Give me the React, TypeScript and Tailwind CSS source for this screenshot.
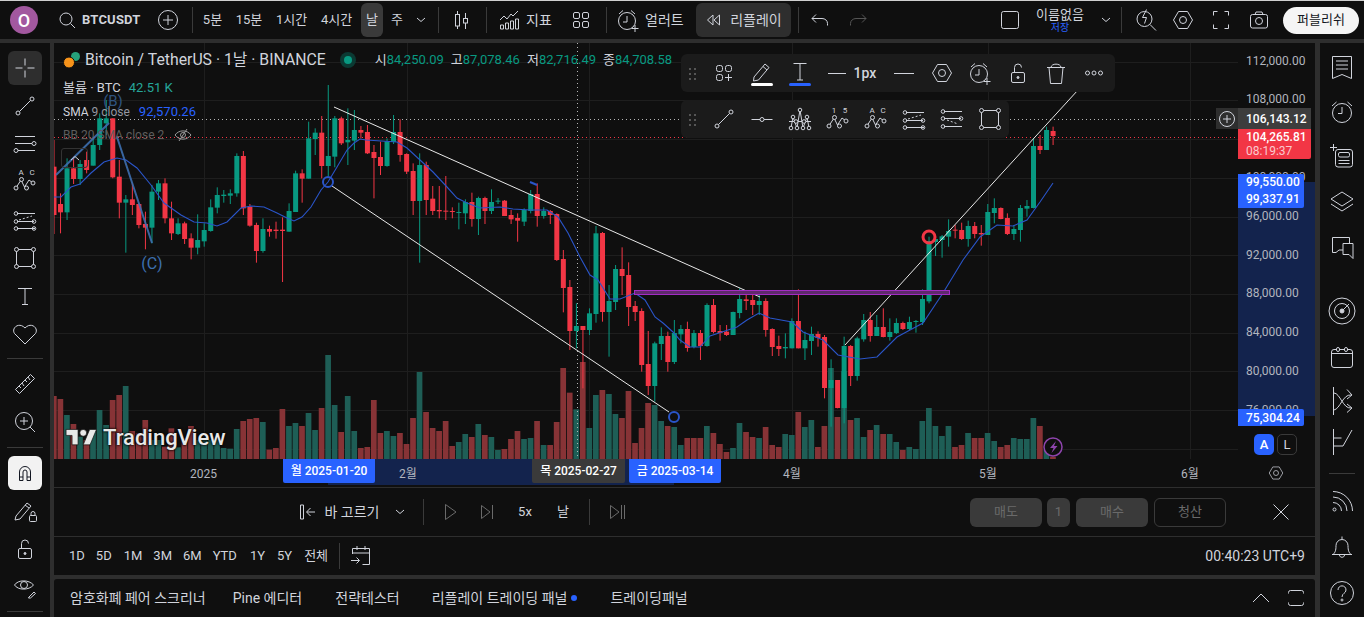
import React from 'react';

type C = [number, number, number, number, number];

// candle values are read off zoomed crops, base + z / 3 gives the pixel y
const candlesA: C[] = [
  [180, 260, 405, 462, 0], [340, 372, 397, 460, 0], [235, 265, 397, 420, 1], [230, 265, 297, 312, 0],
  [240, 252, 297, 315, 1], [215, 240, 270, 280, 0], [170, 195, 257, 257, 1], [100, 115, 195, 210, 1],
  [60, 115, 130, 165, 1], [115, 115, 292, 295, 0], [240, 290, 368, 415, 0], [345, 358, 368, 518, 1],
  [310, 358, 375, 405, 0], [370, 372, 435, 445, 0], [395, 432, 443, 508, 0], [315, 335, 443, 490, 1],
  [300, 310, 335, 360, 1], [295, 310, 415, 430, 0], [365, 415, 460, 480, 0], [415, 430, 462, 465, 1],
  [425, 430, 477, 492, 0], [460, 475, 503, 538, 0], [403, 480, 503, 523, 1], [430, 450, 484, 500, 1],
  [358, 382, 453, 455, 1], [322, 345, 383, 400, 1], [330, 344, 348, 368, 1], [328, 340, 347, 372, 1],
  [220, 228, 340, 350, 1], [213, 228, 385, 405, 0], [372, 380, 437, 440, 0], [428, 435, 513, 548, 0],
  [415, 447, 513, 518, 1], [437, 447, 455, 470, 0], [425, 449, 453, 476, 0], [412, 449, 453, 606, 0],
  [370, 393, 455, 455, 1], [272, 280, 396, 396, 1], [268, 280, 296, 368, 0], [125, 175, 296, 296, 1],
  [145, 158, 177, 225, 1], [108, 158, 258, 295, 0], [15, 228, 258, 288, 1], [108, 115, 230, 262, 1],
];
const candlesB: C[] = [
  [50, 55, 130, 135, 0], [25, 120, 127, 195, 1], [30, 90, 122, 150, 1], [78, 90, 98, 115, 0],
  [75, 96, 160, 162, 0], [135, 156, 174, 295, 0], [125, 171, 198, 225, 0], [115, 124, 198, 200, 1],
  [45, 96, 126, 132, 1], [58, 96, 165, 185, 0], [160, 162, 215, 222, 0], [190, 213, 303, 345, 0],
  [160, 195, 303, 488, 1], [185, 195, 300, 345, 0], [258, 296, 333, 345, 0], [258, 330, 334, 355, 0],
  [228, 332, 335, 360, 0], [322, 333, 336, 355, 0], [308, 336, 339, 388, 1], [298, 306, 340, 372, 1],
  [278, 306, 357, 380, 0], [290, 294, 357, 405, 1], [290, 294, 333, 372, 0], [268, 306, 333, 342, 1],
  [294, 302, 304, 312, 1], [300, 302, 348, 348, 0], [330, 345, 358, 372, 0], [340, 354, 362, 425, 0],
  [325, 330, 365, 378, 1], [270, 282, 333, 340, 1], [250, 282, 348, 380, 0], [322, 333, 348, 356, 1],
  [330, 333, 345, 372, 0], [340, 342, 480, 483, 0], [450, 477, 564, 637, 0], [540, 561, 693, 750, 0],
  [610, 678, 693, 745, 1], [680, 678, 690, 865, 0], [625, 640, 690, 705, 1], [378, 400, 642, 668, 1],
  [396, 399, 636, 665, 0], [555, 603, 636, 770, 1], [495, 507, 606, 630, 1], [442, 507, 528, 585, 0],
  [487, 525, 621, 678, 0], [603, 618, 636, 663, 0], [625, 633, 795, 815, 0], [693, 792, 858, 885, 0],
  [725, 730, 858, 905, 1], [682, 708, 732, 780, 1], [695, 708, 786, 815, 0], [660, 699, 786, 792, 1],
];
const candlesC: C[] = [
  [585, 597, 613, 640, 1], [575, 597, 654, 665, 0], [600, 609, 651, 655, 1], [600, 609, 648, 690, 0],
  [520, 525, 648, 650, 1], [507, 525, 606, 610, 0], [585, 603, 609, 632, 0], [585, 605, 615, 618, 0],
  [545, 546, 615, 615, 1], [475, 507, 549, 565, 1], [480, 508, 513, 540, 0], [490, 510, 525, 555, 0],
  [495, 513, 525, 555, 1], [505, 513, 600, 620, 0], [595, 597, 651, 678, 0], [617, 648, 657, 678, 0],
  [610, 651, 655, 685, 1], [565, 573, 655, 655, 1], [478, 573, 655, 655, 0], [605, 630, 655, 690, 1],
  [590, 612, 633, 675, 1], [604, 612, 624, 650, 0], [615, 621, 774, 805, 0], [688, 750, 774, 890, 1],
  [750, 750, 834, 835, 0], [620, 648, 834, 880, 1], [645, 648, 738, 768, 0], [620, 625, 738, 752, 1],
  [552, 570, 628, 635, 1], [546, 570, 618, 635, 0], [555, 591, 618, 618, 1], [535, 591, 621, 622, 0],
  [565, 606, 621, 632, 1], [565, 579, 609, 612, 1], [575, 579, 597, 600, 0], [560, 576, 597, 600, 1],
  [570, 573, 576, 608, 1], [478, 507, 576, 585, 1], [320, 333, 514, 520, 1], [320, 327, 336, 378, 1],
  [315, 319, 330, 383, 1], [268, 303, 320, 350, 1], [285, 299, 301, 325, 0], [278, 300, 327, 330, 0],
  [272, 288, 327, 350, 1], [276, 288, 312, 325, 0], [285, 309, 313, 347, 0], [222, 246, 315, 315, 1],
  [205, 234, 249, 280, 1], [232, 234, 267, 268, 0], [250, 264, 312, 315, 0], [285, 297, 312, 330, 1],
  [225, 234, 300, 335, 1], [210, 228, 236, 260, 1], [25, 48, 234, 235, 1], [15, 48, 60, 72, 0],
  [-10, 0, 60, 60, 1], [-10, 3, 18, 45, 0],
];

const volumes: [number, number][] = [
  [138, 0], [147, 0], [195, 1], [222, 0], [260, 1], [270, 0], [240, 1], [180, 1], [225, 1], [150, 0],
  [135, 0], [108, 1], [243, 0], [250, 0], [210, 0], [270, 1], [270, 1], [290, 0], [235, 0], [292, 1],
  [265, 0], [228, 0], [270, 1], [270, 1], [270, 1], [265, 1], [294, 1], [296, 1], [237, 1], [213, 0],
  [207, 0], [204, 0], [216, 1], [299, 0], [294, 0], [177, 0], [228, 1], [219, 1], [228, 0], [189, 1],
  [240, 1], [174, 0], [15, 1], [165, 1], [246, 0], [138, 1], [243, 1], [294, 0], [291, 0], [150, 0],
  [249, 0], [243, 1], [258, 1], [249, 0], [282, 0], [204, 0], [66, 1], [186, 0], [234, 0], [243, 0],
  [213, 0], [288, 0], [276, 1], [252, 1], [261, 0], [222, 1], [255, 0], [261, 1], [300, 1], [297, 0],
  [267, 0], [243, 0], [267, 1], [264, 1], [213, 0], [285, 1], [285, 0], [216, 0], [54, 0], [128, 0],
  [178, 1], [36, 0], [234, 1], [135, 1], [120, 0], [132, 1], [192, 1], [204, 0], [123, 0], [279, 0],
  [234, 0], [159, 0], [165, 1], [213, 1], [228, 0], [231, 1], [285, 1], [264, 0], [264, 0], [264, 0],
  [228, 1], [249, 0], [282, 0], [306, 0], [294, 1], [219, 1], [246, 0], [261, 0], [264, 1], [231, 0],
  [285, 0], [291, 0], [252, 1], [255, 1], [186, 0], [231, 1], [210, 1], [291, 0], [228, 0], [54, 1],
  [201, 0], [63, 1], [210, 0], [204, 1], [261, 1], [240, 0], [225, 1], [252, 0], [252, 1], [276, 1],
  [300, 0], [291, 1], [297, 1], [213, 1], [174, 1], [228, 1], [258, 1], [228, 1], [291, 0], [285, 0],
  [249, 1], [264, 0], [264, 0], [249, 1], [273, 1], [291, 0], [285, 0], [264, 1], [267, 1], [267, 1],
  [204, 1], [228, 0], [300, 1], [320, 0],
];

const smaPoints =
  '54,197 61,197 71,187 80,184 91,173 104,162 117,158 126,160 137,168 151,185 164,203 181,215 194,222 207,223 217,226 227,222 241,208 251,206 264,207 277,213 287,218 294,221 302,217 311,207 321,190 328,182 337,167 347,150 ' +
  '354,143 360,139 366,140 397,142 407,148 420,160 433,172 447,187 457,198 467,203 480,208 500,207 513,209 530,210 547,210 558,217 568,233 580,257 590,275 598,280 610,299 620,299 635,293 645,300 655,317 663,323 673,332 680,340 ' +
  '690,347 700,347 710,336 737,327 747,320 759,313 770,318 792,322 803,332 823,340 838,355 860,359 877,357 897,337 910,330 923,323 943,293 963,260 980,237 997,225 1013,226 1027,220 1040,202 1053,183';

const CANDLE_UP = '#089981';
const CANDLE_DOWN = '#f23645';

const candleX = (i: number) => 54 + i * 6.53;

const Candle = ({ c, i, base }: { c: C; i: number; base: number }) => {
  const x = candleX(i);
  const color = c[4] ? CANDLE_UP : CANDLE_DOWN;
  const y = (v: number) => base + v / 3;
  return (
    <g fill={color} stroke="none">
      <rect x={x - 0.5} y={y(c[0])} width={1} height={(c[3] - c[0]) / 3} />
      <rect x={x - 2.5} y={y(c[1])} width={5} height={Math.max((c[2] - c[1]) / 3, 1)} />
    </g>
  );
};

const Ic = ({ children, size = 28, className = '' }: { children: React.ReactNode; size?: number; className?: string }) => (
  <svg width={size} height={size} viewBox="0 0 28 28" fill="none" stroke="currentColor" strokeWidth="1" className={`shrink-0 ${className}`}>
    {children}
  </svg>
);

const Dots = () => (
  <Ic>
    {[9, 14, 19].map((y) => (
      <g key={y} fill="#555" stroke="none">
        <rect x="10" y={y} width="2" height="2" />
        <rect x="15" y={y} width="2" height="2" />
      </g>
    ))}
  </Ic>
);

const Hexagon = ({ size = 28 }: { size?: number }) => (
  <Ic size={size}>
    <path d="M4.500 14 9.500 5.500h9l5 8.500-5 8.500h-9z" />
    <circle cx="14" cy="14" r="3.500" />
  </Ic>
);

const AlarmPlus = () => (
  <Ic>
    <circle cx="13" cy="15" r="8.500" />
    <path d="M13 10v6h-4M5 8l4-3.500M21 8l-4-3.500M21 19v7M17.500 22.500h7" />
  </Ic>
);

const LockOpen = () => (
  <Ic>
    <rect x="7.500" y="13.500" width="13" height="10" rx="1.500" />
    <path d="M10.500 13.500v-5a3.500 3.500 0 0 1 7 0" />
    <circle cx="14" cy="18.500" r="1" fill="currentColor" />
  </Ic>
);

const PointsLine = () => (
  <Ic>
    <path d="M8.500 19.500 19.500 8.500" />
    <circle cx="7" cy="21" r="2" />
    <circle cx="21" cy="7" r="2" />
  </Ic>
);

const FibIcon = () => (
  <Ic>
    <path d="M4 7.500h20M4 14.500h17M6 21.500h18" />
    <circle cx="23" cy="14.500" r="2" fill="#0f0f0f" />
    <circle cx="5" cy="21.500" r="2" fill="#0f0f0f" />
  </Ic>
);

const LabeledWave = ({ a, b }: { a: string; b: string }) => (
  <Ic>
    <text x="10" y="8" fontSize="8" fill="currentColor" stroke="none" textAnchor="middle">{a}</text>
    <text x="21" y="8" fontSize="8" fill="currentColor" stroke="none" textAnchor="middle">{b}</text>
    <path d="M5.500 20 10 13l3.500 7 4.500-7 4 3" />
    <circle cx="5" cy="21" r="2" fill="#1b1b1b" />
    <circle cx="10.500" cy="12.500" r="2" fill="#1b1b1b" />
    <circle cx="15.500" cy="21" r="2" fill="#1b1b1b" />
    <circle cx="22" cy="16" r="2" fill="#1b1b1b" />
  </Ic>
);

const PatternA = () => (
  <Ic>
    <path d="M3 16.500h22M5 23 7 12l4 11L14 5l3 18 4-11 2 11" />
    {[[5, 23], [7, 12], [11, 23], [14, 5], [17, 23], [21, 12], [23, 23], [10, 16.5], [18, 16.5]].map(([x, y]) => (
      <circle key={`${x}-${y}`} cx={x} cy={y} r="1.800" fill="#1b1b1b" />
    ))}
  </Ic>
);

const ChannelLeft = () => (
  <Ic>
    <path d="M6 7.500h18M6 15.500h17M6 22.500h18" />
    <path d="M8 14 21 10" strokeDasharray="2 2" />
    <circle cx="5" cy="7.500" r="1.800" />
    <circle cx="5" cy="15.500" r="1.800" />
    <circle cx="5" cy="22.500" r="1.800" />
    <circle cx="23" cy="15.500" r="1.800" />
    <circle cx="23" cy="22.500" r="1.800" />
  </Ic>
);

const ChannelRight = () => (
  <Ic>
    <path d="M6 6.500h18M6 13.500h17M6 21.500h18" />
    <path d="M9 15 20 19" strokeDasharray="2 2" />
    <circle cx="5" cy="6.500" r="1.800" />
    <circle cx="5" cy="13.500" r="1.800" />
    <circle cx="23" cy="13.500" r="1.800" />
    <circle cx="5" cy="21.500" r="1.800" />
  </Ic>
);

const RectPoints = () => (
  <Ic>
    <rect x="5.500" y="5.500" width="17" height="17" />
    {[[5.5, 5.5], [22.5, 5.5], [5.5, 22.5], [22.5, 22.5]].map(([x, y]) => (
      <circle key={`${x}-${y}`} cx={x} cy={y} r="2" fill="#141414" />
    ))}
  </Ic>
);

const Sep = ({ className = 'h-[26px]' }: { className?: string }) => <div className={`w-px bg-[#3a3a3a] ${className}`} />;

const Slot = ({ w, children, className = '' }: { w: string; children: React.ReactNode; className?: string }) => (
  <div className={`flex items-center justify-center shrink-0 ${w} ${className}`}>{children}</div>
);

const Chevron = () => (
  <svg width="10" height="6" viewBox="0 0 10 6" fill="none" stroke="currentColor"><path d="m1 1 4 3.500L9 1" /></svg>
);

const TopBar = () => (
  <div className="flex h-[38px] shrink-0 items-center bg-[#0f0f0f] text-[13px] text-[#d1d4dc]">
    <Slot w="w-[48px]">
      <div className="flex h-[28px] w-[28px] items-center justify-center rounded-full bg-[#a2589f] text-[18px] font-medium text-white">O</div>
    </Slot>
    <div className="flex w-[100px] items-center pl-[5px]">
      <Ic><circle cx="13" cy="13" r="6" /><path d="m17.500 17.500 4.500 4.500" /></Ic>
      <span className="ml-[1px] text-[13px] font-bold tracking-[0.2px]">BTCUSDT</span>
    </div>
    <Slot w="w-[40px]"><Ic><circle cx="14" cy="14" r="9.500" /><path d="M14 9v10M9 14h10" /></Ic></Slot>
    <Slot w="w-[8px]"><Sep /></Slot>
    <Slot w="w-[33px]">5분</Slot>
    <Slot w="w-[40px]">15분</Slot>
    <Slot w="w-[45px]">1시간</Slot>
    <Slot w="w-[45px]">4시간</Slot>
    <div className="ml-[2px] flex h-[34px] w-[22px] items-center justify-center rounded-md bg-[#3a3a3a]">날</div>
    <Slot w="w-[28px]">주</Slot>
    <Slot w="w-[20px]"><Chevron /></Slot>
    <Slot w="w-[14px]"><Sep /></Slot>
    <Slot w="w-[32px]">
      <Ic>
        <path d="M10.500 5v3M10.500 20v3M18.500 7v5M18.500 17v6" />
        <rect x="8.500" y="8.500" width="4" height="11.500" />
        <rect x="16.500" y="12.500" width="4" height="4.500" />
      </Ic>
    </Slot>
    <Slot w="w-[18px]"><Sep /></Slot>
    <div className="flex w-[69px] items-center">
      <Ic>
        <path d="M5 14l4-4 3 3 4-5 2 2 5-5" />
        <path d="M5.500 23v-4h3v4zM10.500 23v-6h3v6zM15.500 23v-8h3v8zM20.500 23V13h3v10z" />
      </Ic>
      <span className="ml-[3px] text-[14px]">지표</span>
    </div>
    <Slot w="w-[34px]">
      <Ic>
        <rect x="6.500" y="6.500" width="6" height="6" rx="1.500" />
        <rect x="15.500" y="6.500" width="6" height="6" rx="1.500" />
        <rect x="6.500" y="15.500" width="6" height="6" rx="1.500" />
        <rect x="15.500" y="15.500" width="6" height="6" rx="1.500" />
      </Ic>
    </Slot>
    <Slot w="w-[16px]"><Sep /></Slot>
    <div className="flex w-[82px] items-center">
      <AlarmPlus />
      <span className="ml-[3px] text-[14px]">얼러트</span>
    </div>
    <div className="flex h-[34px] w-[95px] items-center justify-center rounded-md bg-[#2e2e2e]">
      <svg width="18" height="18" viewBox="0 0 18 18" fill="none" stroke="currentColor"><path d="M8 4 2.500 9 8 14zM14.500 4 9 9l5.500 5z" /></svg>
      <span className="ml-[7px] text-[14px]">리플레이</span>
    </div>
    <Slot w="w-[14px]"><Sep /></Slot>
    <Slot w="w-[30px]"><Ic><path d="M10 8.500 6 12.500l4 4M6 12.500h10c3 0 5.500 2 5.500 5v2" /></Ic></Slot>
    <Slot w="w-[38px]" className="ml-[4px] text-[#555]"><Ic><path d="m18 8.500 4 4-4 4M22 12.500H12c-3 0-5.500 2-5.500 5v2" /></Ic></Slot>
    <div className="ml-auto flex items-center">
      <Slot w="w-[26px]"><Ic><rect x="5.500" y="5.500" width="17" height="17" rx="2" /></Ic></Slot>
      <div className="flex w-[74px] flex-col items-center leading-none">
        <span className="text-[13px] leading-[15px]">이름없음</span>
        <span className="text-[10px] leading-[11px] text-[#2962ff]">저장</span>
      </div>
      <Slot w="w-[17px]"><Chevron /></Slot>
      <Slot w="w-[14px]"><Sep /></Slot>
      <Slot w="w-[36px]">
        <Ic>
          <circle cx="12.500" cy="13" r="7.500" />
          <path d="m18 18.500 6 6M14.500 3.500l-4 8h4l-2 6" />
        </Ic>
      </Slot>
      <Slot w="w-[38px]"><Hexagon /></Slot>
      <Slot w="w-[38px]"><Ic><path d="M10.500 5.500h-4v4M17.500 5.500h4v4M10.500 22.500h-4v-4M17.500 22.500h4v-4" /></Ic></Slot>
      <Slot w="w-[38px]"><Ic><rect x="5.500" y="8.500" width="17" height="13.500" rx="2" /><path d="M10 8.500l1-2.500h6l1 2.500" /><circle cx="14" cy="15" r="3.500" /></Ic></Slot>
      <div className="ml-[5px] mr-[5px] flex h-[27px] w-[76px] items-center justify-center rounded-full bg-[#f5f5f5] text-[13px] text-[#131722]">퍼블리쉬</div>
    </div>
  </div>
);

const leftTools: { node: React.ReactNode; h: string; active?: boolean }[] = [
  { node: <Ic><path d="M14 4.500v7M14 16.500v7M4.500 14h7M16.500 14h7" /></Ic>, h: 'h-[38px]', active: true },
  { node: <PointsLine />, h: 'h-[38px]' },
  { node: <FibIcon />, h: 'h-[36px]' },
  { node: <LabeledWave a="A" b="C" />, h: 'h-[40px]' },
  { node: <ChannelLeft />, h: 'h-[38px]' },
  { node: <RectPoints />, h: 'h-[38px]' },
  { node: <Ic><path d="M7 6.500h14M14 6.500v16M11 22.500h6" /></Ic>, h: 'h-[38px]' },
  { node: <Ic><path d="M14 24 3.500 13.500C0 8 8 1.500 14 8c6-6.500 14 0 10.500 5.500z" /></Ic>, h: 'h-[37px]' },
];

const LeftToolbar = () => (
  <div className="flex w-[50px] shrink-0 flex-col items-center bg-[#0f0f0f] text-[#d1d4dc]">
    <div className="h-[6px]" />
    {leftTools.map((t, i) => (
      <div key={i} className={`flex w-full items-center justify-center ${t.h}`}>
        <div className={`flex h-[34px] w-[34px] items-center justify-center rounded-md ${t.active ? 'bg-[#2e2e2e]' : ''}`}>{t.node}</div>
      </div>
    ))}
    <div className="my-[6px] h-px w-[36px] bg-[#3a3a3a]" />
    <div className="flex h-[38px] w-full items-center justify-center">
      <Ic><path d="m4.500 19.500 15-15 4 4-15 15zM8 16l2 2M11 13l2 3M14 10l2 2M17 7l2 3" /></Ic>
    </div>
    <div className="flex h-[38px] w-full items-center justify-center">
      <Ic><circle cx="13" cy="13" r="8.500" /><path d="m19 19 5 5M13 9v8M9 13h8" /></Ic>
    </div>
    <div className="mb-[8px] mt-[6px] h-px w-[36px] bg-[#3a3a3a]" />
    <div className="flex h-[34px] w-[34px] items-center justify-center rounded-md bg-[#f2f2f2] text-[#131722]">
      <Ic><path d="M8.500 21.500V13a5.500 5.500 0 0 1 11 0v8.500h-3.500V13a2 2 0 0 0-4 0v8.500zM8.500 18h3.500M16 18h3.500" /></Ic>
    </div>
    <div className="mt-[2px] flex h-[38px] w-full items-center justify-center">
      <Ic>
        <path d="M5 19 16 6l4 3L9 22l-5 1zM14 8l4 3" />
        <rect x="18.500" y="18.500" width="7" height="6" rx="1" />
        <path d="M20 18.500v-2a2 2 0 0 1 4 0v2" />
      </Ic>
    </div>
    <div className="flex h-[38px] w-full items-center justify-center"><LockOpen /></div>
    <div className="mt-[1px] flex h-[38px] w-full items-center justify-center">
      <Ic>
        <path d="M3.500 11C7 5.500 18 5.500 22.500 11 18 16.500 7 16.500 3.500 11z" />
        <circle cx="13" cy="11" r="3.500" />
        <path d="m18 23 5-5 1.500 1.500-5 4.500h-2z" />
      </Ic>
    </div>
    <div className="mt-[4px] h-px w-[36px] bg-[#3a3a3a]" />
  </div>
);

const rightTools: { node: React.ReactNode; h: string; mt?: string }[] = [
  { h: 'h-[44px]', node: <Ic><path d="M4.500 3.500h19v22l-9.500-4-9.500 4zM8 8h12M8 12h12M8 16h12" /></Ic> },
  { h: 'h-[45px]', node: <Ic><circle cx="14" cy="15" r="9.500" /><path d="M14 9v6.500h-4M4 8l4.500-4M24 8l-4.500-4" /></Ic> },
  { h: 'h-[44px]', node: <Ic><rect x="7.500" y="7.500" width="17" height="17.500" rx="2.500" /><rect x="10.500" y="10.500" width="11" height="4.500" rx="1.500" fill="#0f0f0f" /><path d="M10.500 18.500h11M10.500 21.500h11M5.500 2v7M2 5.500h7" /></Ic> },
  { h: 'h-[45px]', node: <Ic><path d="M14 5 25 12l-11 7-11-7zM3 17l11 7 11-7" /></Ic> },
  { h: 'h-[45px]', node: <Ic><path d="M4.500 5.500h17v6M4.500 5.500v15h3.500l3-2.500h4M15 11.500h10v15l-4-4h-6z" /></Ic> },
  { h: 'h-[58px]', mt: 'mt-[14px]', node: <Ic><circle cx="14" cy="14" r="13" /><circle cx="14" cy="14" r="7.500" /><circle cx="14" cy="14" r="2" fill="currentColor" /><path d="m14 14 7-7" /></Ic> },
  { h: 'h-[34px]', node: <Ic><rect x="3.500" y="6.500" width="21" height="18" rx="2.500" /><path d="M3.500 10.500h21" /><rect x="8.500" y="4.500" width="3" height="4" rx="1.500" fill="#0f0f0f" /><rect x="16.500" y="4.500" width="3" height="4" rx="1.500" fill="#0f0f0f" /></Ic> },
  { h: 'h-[54px]', node: <Ic><path d="M5.500 0v28M6 6c6 0 9 16 17 15M6 23c6-1 9-16 17-15M19 2.500 24 8l-5 4M19 17l5 4-5 4.500" /></Ic> },
  { h: 'h-[28px]', node: <Ic><path d="M5.500 1v26M5.500 18H15l9-16M5.500 10h8" /></Ic> },
];

const RightToolbar = () => (
  <div className="flex w-[44px] shrink-0 flex-col items-center bg-[#0f0f0f] text-[#d1d4dc]">
    <div className="h-[2px]" />
    {rightTools.map((t, i) => (
      <div key={i} className={`flex w-full items-center justify-center ${t.h} ${t.mt ?? ''}`}>{t.node}</div>
    ))}
    <div className="mb-[6px] mt-[17px] h-px w-[26px] bg-[#3a3a3a]" />
    <div className="flex h-[44px] w-full items-center justify-center">
      <Ic><circle cx="6.500" cy="21.500" r="1.500" /><path d="M5 14.500a8.500 8.500 0 0 1 8.500 8.500M5 9a14 14 0 0 1 14 14M5 3.500A19.500 19.500 0 0 1 24.500 23" /></Ic>
    </div>
    <div className="flex h-[46px] w-full items-center justify-center">
      <Ic><path d="M5 21.500c2-2 3-3.500 3-9a6 6 0 0 1 12 0c0 5.500 1 7 3 9z" /><path d="M4 21.500h20M11.500 22c0 3 5 3 5 0M14 6V3.500" /></Ic>
    </div>
    <div className="flex h-[46px] w-full items-center justify-center">
      <Ic><circle cx="14" cy="14" r="11.500" /><path d="M10 11c0-5.500 8-5.500 8 0 0 3.500-4 3-4 7" /><circle cx="14" cy="21" r="1" /></Ic>
    </div>
  </div>
);

const PriceTick = ({ top, children }: { top: string; children: React.ReactNode }) => (
  <span className={`absolute left-[8px] text-[12px] leading-[14px] text-[#b2b5be] ${top}`}>{children}</span>
);

const PriceAxis = () => (
  <div className="relative w-[77px] shrink-0 overflow-hidden bg-[#0f0f0f]">
    <div className="absolute inset-x-0 top-[139px] h-[234px] bg-[#13234d]" />
    <PriceTick top="top-[11px]">112,000.00</PriceTick>
    <PriceTick top="top-[49px]">108,000.00</PriceTick>
    <PriceTick top="top-[127px]">100,000.00</PriceTick>
    <PriceTick top="top-[166px]">96,000.00</PriceTick>
    <PriceTick top="top-[205px]">92,000.00</PriceTick>
    <PriceTick top="top-[243px]">88,000.00</PriceTick>
    <PriceTick top="top-[282px]">84,000.00</PriceTick>
    <PriceTick top="top-[321px]">80,000.00</PriceTick>
    <PriceTick top="top-[360px]">76,000.00</PriceTick>
    <div className="absolute left-0 top-[65px] flex h-[21px] w-[73px] items-center bg-[#3d3d3d] pl-[8px] text-[12px] font-medium text-white">106,143.12</div>
    <div className="absolute left-0 top-[86px] flex h-[30px] w-[73px] flex-col justify-center rounded-br-[2px] bg-[#f23645] pl-[8px] text-[12px] leading-[14px]">
      <span className="font-medium text-white">104,265.81</span>
      <span className="text-[#fbc8cd]">08:19:37</span>
    </div>
    <div className="absolute left-0 top-[131px] flex h-[34px] w-[66px] flex-col justify-center rounded-r-[2px] bg-[#2962ff] pl-[8px] text-[12px] font-medium leading-[17px] text-white">
      <span>99,550.00</span>
      <span>99,337.91</span>
    </div>
    <div className="absolute left-0 top-[366px] flex h-[17px] w-[66px] items-center rounded-r-[2px] bg-[#2962ff] pl-[8px] text-[12px] font-medium text-white">75,304.24</div>
    <div className="absolute left-[16px] top-[391px] flex h-[21px] w-[20px] items-center justify-center rounded-[5px] bg-[#2962ff] text-[13px] font-medium text-white">A</div>
    <div className="absolute left-[39px] top-[391px] flex h-[21px] w-[20px] items-center justify-center rounded-[5px] border border-[#3a3a3a] text-[13px] text-[#d1d4dc]">L</div>
  </div>
);

const Plot = () => (
  <svg viewBox="54 43 1184 416" width="1184" height="416" className="block">
    {[62, 100, 139, 178, 217, 255, 294, 333, 371, 410, 449].map((y) => (
      <line key={y} x1="54" x2="1238" y1={y + 0.5} y2={y + 0.5} stroke="#1e1e1e" />
    ))}
    {[204, 407, 589, 792, 988, 1190].map((x) => (
      <line key={x} x1={x + 0.5} x2={x + 0.5} y1="43" y2="459" stroke="#1e1e1e" />
    ))}
    {volumes.map(([z, up], i) => (
      <rect key={i} x={candleX(i) - 3} y={350 + z / 3} width="5.700" height={(328 - z) / 3} fill={up ? '#1e5e56' : '#873336'} />
    ))}
    <line x1="54" x2="1238" y1="119.500" y2="119.500" stroke="#b5b5b5" strokeDasharray="1 3" />
    <line x1="54" x2="1238" y1="137.500" y2="137.500" stroke="#f23645" strokeDasharray="1 3" />
    <line x1="577.500" x2="577.500" y1="43" y2="459" stroke="#b5b5b5" strokeDasharray="1 3" />
    {candlesA.map((c, i) => <Candle key={i} c={c} i={i} base={80} />)}
    {candlesB.map((c, i) => <Candle key={i} c={c} i={i + 44} base={100} />)}
    {candlesC.map((c, i) => <Candle key={i} c={c} i={i + 96} base={130} />)}
    <polyline points={smaPoints} fill="none" stroke="#2a55c9" strokeWidth="1.100" />
    <path d="M56 175 109 123M117 137l35 106" stroke="#3d6fb0" strokeWidth="2" fill="none" opacity="0.9" />
    <path d="M530 182l7 3" stroke="#2a55c9" strokeWidth="2" />
    <path d="M334 107 760 297M332 186 669 412M845 345 1078 90" stroke="#e8e8e8" strokeWidth="1" fill="none" />
    <rect x="634.500" y="290.500" width="315" height="4" fill="#5f2a6c" stroke="#a32cc4" strokeWidth="1" />
    <circle cx="328" cy="182" r="5" fill="none" stroke="#2a55c9" strokeWidth="2" />
    <circle cx="674" cy="417" r="5" fill="none" stroke="#2a55c9" strokeWidth="2" />
    <circle cx="929" cy="237" r="6" fill="none" stroke="#f23645" strokeWidth="3" />
    <circle cx="1053" cy="447" r="9" fill="#0f0f0f" stroke="#8e44ad" strokeWidth="1.500" />
    <path d="M1056 441l-6 7h3.500l-2 5 6-7h-3.500z" fill="#8e44ad" />
    <text x="113" y="106" fontSize="15" textAnchor="middle" fill="#2f5480">(B)</text>
    <text x="152" y="269" fontSize="16" textAnchor="middle" fill="#3d6fb0">(C)</text>
  </svg>
);

const Legend = () => (
  <div className="absolute left-0 top-0 text-[#d1d4dc]">
    <div className="absolute left-[9px] top-[8px] flex h-[18px] items-center whitespace-nowrap">
      <svg width="18" height="18" viewBox="0 0 18 18">
        <circle cx="12.500" cy="5.500" r="4.500" fill="#26a17b" />
        <circle cx="6" cy="11.500" r="5.500" fill="#f7931a" stroke="#0f0f0f" />
      </svg>
      <span className="ml-[4px] text-[15.800px] leading-none">Bitcoin / TetherUS · 1날 · BINANCE</span>
      <span className="ml-[14px] flex h-[16px] w-[16px] items-center justify-center rounded-full bg-[#0b3a33]">
        <span className="h-[8px] w-[8px] rounded-full bg-[#089981]" />
      </span>
      <div className="ml-[19px] flex gap-[7px] text-[13px]">
        <span>시<span className="text-[#089981]">84,250.09</span></span>
        <span>고<span className="text-[#089981]">87,078.46</span></span>
        <span>저<span className="text-[#089981]">82,716.49</span></span>
        <span>종<span className="text-[#089981]">84,708.58</span></span>
      </div>
    </div>
    <div className="absolute left-[9px] top-[35px] flex items-center gap-[8px] whitespace-nowrap text-[13px]">
      <span>볼륨 · BTC</span>
      <span className="text-[#26a69a]">42.51 K</span>
    </div>
    <div className="absolute left-[9px] top-[59px] flex items-center gap-[9px] whitespace-nowrap text-[12px]">
      <span>SMA <span className="text-[#9598a1]">9 close</span></span>
      <span className="text-[13px] text-[#2962ff]">92,570.26</span>
    </div>
    <div className="absolute left-[9px] top-[83px] flex items-center whitespace-nowrap text-[12px] text-[#5d5d5d]">
      <span>BB 20 SMA close 2</span>
      <svg width="18" height="14" viewBox="0 0 18 14" fill="none" stroke="#9a9a9a" className="ml-[10px]">
        <path d="M1 7c4-5.500 12-5.500 16 0-4 5.500-12 5.500-16 0z" />
        <circle cx="9" cy="7" r="2.500" />
        <path d="M13 1 5 13" />
      </svg>
    </div>
    <div className="absolute left-[7px] top-[105px] flex h-[20px] w-[27px] items-center justify-center rounded-[3px] border border-[#333]">
      <svg width="10" height="6" viewBox="0 0 10 6" fill="none" stroke="#d1d4dc"><path d="m1 5 4-3.500L9 5" /></svg>
    </div>
  </div>
);

const Watermark = () => (
  <div className="absolute left-[11px] top-[383px] flex items-center text-[#e8e8e8]">
    <svg width="33" height="24" viewBox="0 0 36 28" fill="currentColor" stroke="#0f0f0f" strokeWidth="0.800">
      <path d="M14 22H7V11H0V4h14v18zM28 22h-8l7.500-18h8L28 22z" />
      <circle cx="20" cy="8" r="4" />
    </svg>
    <span className="ml-[5px] text-[22px] font-medium leading-none [text-shadow:0_0_3px_#000,0_0_2px_#000]">TradingView</span>
  </div>
);

const floatA: { w: string; node: React.ReactNode }[] = [
  { w: 'w-[24px]', node: <Dots /> },
  {
    w: 'w-[38px]',
    node: (
      <Ic>
        <rect x="6.500" y="6.500" width="6" height="6" rx="2" />
        <rect x="15.500" y="6.500" width="6" height="6" rx="2" />
        <rect x="6.500" y="15.500" width="6" height="6" rx="2" />
        <path d="M18.500 15v7M15 18.500h7" />
      </Ic>
    ),
  },
  {
    w: 'w-[38px]',
    node: (
      <div className="flex flex-col items-center">
        <svg width="24" height="22" viewBox="0 0 24 22" fill="none" stroke="currentColor"><path d="M4 17 15 4l4 3.500L8.500 20l-5 1zM13 6.500l4 3.500" /></svg>
        <div className="mt-[1px] h-[3px] w-[22px] rounded-full bg-white" />
      </div>
    ),
  },
  {
    w: 'w-[38px]',
    node: (
      <div className="flex flex-col items-center">
        <svg width="24" height="22" viewBox="0 0 24 22" fill="none" stroke="currentColor"><path d="M5.500 3.500h13M12 3.500V20M9 20h6" /></svg>
        <div className="mt-[1px] h-[3px] w-[22px] rounded-full bg-[#2962ff]" />
      </div>
    ),
  },
  {
    w: 'w-[66px]',
    node: (
      <div className="flex items-center gap-[8px]">
        <div className="h-px w-[18px] bg-[#d1d4dc]" />
        <span className="text-[14px] font-medium">1px</span>
      </div>
    ),
  },
  { w: 'w-[38px]', node: <div className="h-px w-[20px] bg-[#d1d4dc]" /> },
  { w: 'w-[38px]', node: <Hexagon /> },
  { w: 'w-[38px]', node: <AlarmPlus /> },
  { w: 'w-[38px]', node: <LockOpen /> },
  { w: 'w-[38px]', node: <Ic><path d="M5 8.500h18M7 8.500l1.500 16h11l1.500-16M9 8.500C9 4 19 4 19 8.500" /></Ic> },
  {
    w: 'w-[38px]',
    node: <Ic><circle cx="7.500" cy="14" r="2" /><circle cx="14" cy="14" r="2" /><circle cx="20.500" cy="14" r="2" /></Ic>,
  },
];

const floatB: { w: string; node: React.ReactNode }[] = [
  { w: 'w-[24px]', node: <Dots /> },
  { w: 'w-[38px]', node: <PointsLine /> },
  { w: 'w-[38px]', node: <Ic><path d="M3.500 14.500H12M16 14.500h8.500" /><circle cx="14" cy="14.500" r="2" /></Ic> },
  { w: 'w-[38px]', node: <PatternA /> },
  { w: 'w-[38px]', node: <LabeledWave a="1" b="5" /> },
  { w: 'w-[38px]', node: <LabeledWave a="A" b="C" /> },
  { w: 'w-[38px]', node: <ChannelLeft /> },
  { w: 'w-[38px]', node: <ChannelRight /> },
  { w: 'w-[38px]', node: <RectPoints /> },
];

const FloatBar = ({ items, className }: { items: { w: string; node: React.ReactNode }[]; className: string }) => (
  <div className={`absolute flex h-[38px] items-center rounded-md bg-[#1b1b1b] text-[#d1d4dc] ${className}`}>
    {items.map((it, i) => (
      <Slot key={i} w={it.w}>{it.node}</Slot>
    ))}
  </div>
);

const TimeAxis = () => (
  <div className="relative h-[28px] shrink-0 bg-[#0f0f0f] text-[12px] text-[#b2b5be]">
    <div className="absolute left-[274px] top-0 h-[26px] w-[346px] bg-[#13234d]" />
    <span className="absolute left-[136px] top-[6px]">2025</span>
    <span className="absolute left-[345px] top-[6px]">2월</span>
    <span className="absolute left-[729px] top-[6px]">4월</span>
    <span className="absolute left-[925px] top-[6px]">5월</span>
    <span className="absolute left-[1127px] top-[6px]">6월</span>
    <div className="absolute left-[229px] top-0 flex h-[24px] w-[92px] items-center justify-center rounded-b-[2px] bg-[#2962ff] font-medium text-white">월 2025-01-20</div>
    <div className="absolute left-[478px] top-0 flex h-[24px] w-[93px] items-center justify-center rounded-b-[2px] bg-[#3a3a3a] font-medium text-white">목 2025-02-27</div>
    <div className="absolute left-[575px] top-0 flex h-[24px] w-[92px] items-center justify-center rounded-b-[2px] bg-[#2962ff] font-medium text-white">금 2025-03-14</div>
    <div className="absolute left-[1212px] top-[4px] text-[#d1d4dc]"><Hexagon size={20} /></div>
  </div>
);

const ReplayBar = () => (
  <div className="flex h-[48px] shrink-0 items-center bg-[#0f0f0f] text-[13px] text-[#d1d4dc]">
    <div className="w-[240px]" />
    <Slot w="w-[28px]">
      <svg width="18" height="16" viewBox="0 0 18 16" fill="none" stroke="currentColor"><path d="M1.500 1v14h3V1zM16 8H8M11.500 4 7.500 8l4 4" /></svg>
    </Slot>
    <span className="w-[60px] text-center text-[14px]">바 고르기</span>
    <Slot w="w-[36px]"><Chevron /></Slot>
    <Slot w="w-[10px]"><Sep /></Slot>
    <Slot w="w-[44px]" className="text-[#6a6a6a]"><Ic><path d="M9.500 6.500v15L20 14z" /></Ic></Slot>
    <Slot w="w-[30px]" className="text-[#6a6a6a]"><Ic><path d="M8.500 7.500v13L17 14zM19.500 7v14" /></Ic></Slot>
    <span className="ml-[9px] w-[28px] text-center">5x</span>
    <span className="ml-[10px] w-[28px] text-center">날</span>
    <Slot w="w-[24px]"><Sep /></Slot>
    <Slot w="w-[28px]" className="ml-[3px] text-[#6a6a6a]"><Ic><path d="M6.500 7.500v13L15 14zM17.500 7v14M20.500 7v14" /></Ic></Slot>
    <div className="ml-auto flex items-center text-[13px]">
      <div className="flex h-[29px] w-[72px] items-center justify-center rounded-md bg-[#3a3a3a] text-[#6a6a6a]">매도</div>
      <div className="ml-[5px] flex h-[29px] w-[23px] items-center justify-center rounded-md bg-[#3a3a3a] text-[#6a6a6a]">1</div>
      <div className="ml-[6px] flex h-[29px] w-[72px] items-center justify-center rounded-md bg-[#3a3a3a] text-[#6a6a6a]">매수</div>
      <div className="ml-[6px] flex h-[29px] w-[72px] items-center justify-center rounded-md border border-[#3a3a3a] text-[#6a6a6a]">청산</div>
      <Slot w="w-[28px]" className="ml-[41px] mr-[20px]"><Ic><path d="m6.500 6.500 15 15M21.500 6.500l-15 15" /></Ic></Slot>
    </div>
  </div>
);

const ranges: [string, string][] = [
  ['1D', 'ml-[15px]'], ['5D', 'ml-[11px]'], ['1M', 'ml-[12px]'], ['3M', 'ml-[11px]'], ['6M', 'ml-[11px]'],
  ['YTD', 'ml-[11px]'], ['1Y', 'ml-[13px]'], ['5Y', 'ml-[12px]'], ['전체', 'ml-[12px]'],
];

const RangeBar = () => (
  <div className="flex h-[38px] shrink-0 items-center bg-[#0f0f0f] text-[13px] text-[#d1d4dc]">
    {ranges.map(([label, ml]) => (
      <span key={label} className={ml}>{label}</span>
    ))}
    <div className="ml-[11px]"><Sep /></div>
    <div className="ml-[7px]">
      <Ic>
        <path d="M5.500 12V6.500h17V22.500h-7M5.500 11h17M10 4v4M18 4v4" />
        <path d="M4 18.500h8M9.500 15.500l3 3-3 3" />
      </Ic>
    </div>
    <span className="ml-auto mr-[10px] text-[14px]">00:40:23 UTC+9</span>
  </div>
);

const TabBar = () => (
  <div className="flex h-[38px] shrink-0 items-center rounded-t-[3px] bg-[#0f0f0f] text-[14px] text-[#d1d4dc]">
    <span className="ml-[16px]">암호화폐 페어 스크리너</span>
    <span className="ml-[27px]">Pine 에디터</span>
    <span className="ml-[33px]">전략테스터</span>
    <span className="ml-[32px]">리플레이 트레이딩 패널</span>
    <span className="ml-[4px] h-[6px] w-[6px] rounded-full bg-[#2962ff]" />
    <span className="ml-[33px]">트레이딩패널</span>
    <div className="ml-auto flex items-center pr-[5px]">
      <Slot w="w-[28px]"><Ic><path d="m6 18 8-8 8 8" /></Ic></Slot>
      <Slot w="w-[28px]" className="ml-[7px]"><Ic><path d="M10.500 6.500h-2a2 2 0 0 0-2 2v1M17.500 6.500h2a2 2 0 0 1 2 2v1M10.500 21.500h-2a2 2 0 0 1-2-2v-1M17.500 21.500h2a2 2 0 0 0 2-2v-1" /><path d="M10 6.500h8M10 21.500h8" /></Ic></Slot>
    </div>
  </div>
);

export default function App() {
  return (
    <div className="flex h-screen w-screen flex-col overflow-hidden bg-[#2e2e2e] font-['Roboto','Noto_Sans_CJK_KR',sans-serif]">
      <div className="h-px shrink-0 bg-[#cfcfcf]" />
      <TopBar />
      <div className="h-[4px] shrink-0" />
      <div className="flex min-h-0 flex-1">
        <LeftToolbar />
        <div className="w-[4px] shrink-0" />
        <div className="flex w-[1261px] shrink-0 flex-col">
          <div className="flex h-[416px] shrink-0">
            <div className="relative w-[1184px] shrink-0 overflow-hidden bg-[#0f0f0f]">
              <Plot />
              <Legend />
              <Watermark />
              <FloatBar className="left-[627px] top-[11px] w-[434px]" items={floatA} />
              <FloatBar className="left-[627px] top-[57px] w-[328px]" items={floatB} />
              <div className="absolute left-[1162px] top-[65px] flex h-[21px] w-[22px] items-center justify-center bg-[#2e2e2e] text-[#d1d4dc]">
                <svg width="18" height="18" viewBox="0 0 18 18" fill="none" stroke="currentColor"><circle cx="9" cy="9" r="7.500" /><path d="M9 5v8M5 9h8" /></svg>
              </div>
            </div>
            <PriceAxis />
          </div>
          <TimeAxis />
          <div className="h-px shrink-0 bg-[#2e2e2e]" />
          <ReplayBar />
          <div className="h-px shrink-0 bg-[#2e2e2e]" />
          <RangeBar />
          <div className="h-[4px] shrink-0" />
          <TabBar />
        </div>
        <div className="w-[5px] shrink-0" />
        <RightToolbar />
      </div>
    </div>
  );
}
